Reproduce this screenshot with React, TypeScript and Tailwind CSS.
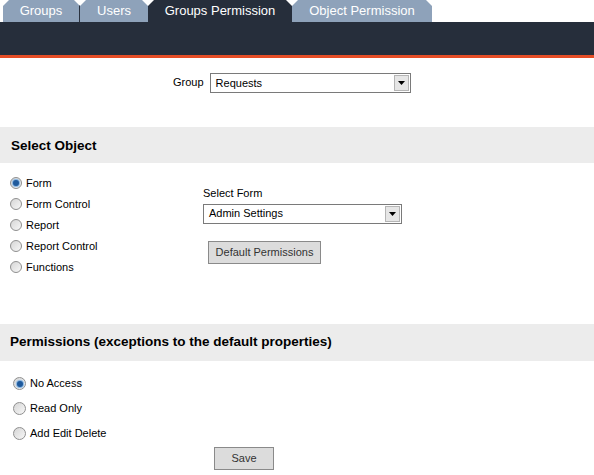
import React from "react"

const tabs = [
  { label: "Groups", w: "w-[77px]", active: false },
  { label: "Users", w: "w-[68px]", active: false },
  { label: "Groups Permission", w: "w-[144px]", active: true },
  { label: "Object Permission", w: "w-[140px]", active: false },
]

function Radio({ checked, big }: { checked?: boolean; big?: boolean }) {
  return (
    <span
      className={`flex items-center justify-center rounded-full border border-[#8f8f8f] bg-gradient-to-br from-[#d6d6d6] to-[#f7f7f7] ${big ? "h-[13px] w-[13px]" : "h-[12px] w-[12px]"}`}
    >
      {checked && <span className="h-[6px] w-[6px] rounded-full bg-[#1f5a9c] shadow-[0_0_1px_1px_#7fb0e0]" />}
    </span>
  )
}

function Select({ value, width }: { value: string; width: string }) {
  return (
    <div className={`flex h-[20px] items-center border border-[#7a7a7a] bg-white ${width}`}>
      <span className="flex-1 pl-[5px] text-[11px] text-black">{value}</span>
      <span className="mr-[1px] flex h-[16px] w-[15px] items-center justify-center border border-[#b5b5b5] bg-[#e6e6e6]">
        <svg width="7" height="4" viewBox="0 0 7 4">
          <path d="M0 0h7L3.5 4z" fill="#000" />
        </svg>
      </span>
    </div>
  )
}

export default function App() {
  return (
    <div className="h-[475px] w-[594px] bg-white font-['Liberation_Sans',Arial,sans-serif]">
      {/* tabs */}
      <div className="flex h-[22px] pl-[3px]">
        {tabs.map((t, i) => (
          <div
            key={t.label}
            className={`flex items-center justify-center text-[13px] text-white ${t.w} ${t.active ? "bg-[#262e3b]" : "bg-[#8ea2ba]"} ${i === 0 ? "border-r border-[#2b3340]" : ""} [clip-path:polygon(6px_0,calc(100%-6px)_0,100%_6px,100%_100%,0_100%,0_6px)]`}
          >
            {t.label}
          </div>
        ))}
      </div>
      <div className="h-[33px] bg-[#262e3b]" />
      <div className="h-[3px] bg-[#e54d26]" />

      {/* group */}
      <div className="flex items-start pl-[173px] pt-[15px]">
        <span className="pt-[1px] text-[11px] text-black">Group</span>
        <div className="ml-[6px]">
          <Select value="Requests" width="w-[201px]" />
        </div>
      </div>

      {/* select object */}
      <div className="mt-[34px] flex h-[36px] items-center bg-[#ececec] pl-[11px]">
        <span className="pt-[2px] text-[13.5px] font-bold text-black">Select Object</span>
      </div>
      <div className="flex pt-[14px]">
        <div className="flex w-[203px] flex-col gap-[9px] pl-[10px]">
          {["Form", "Form Control", "Report", "Report Control", "Functions"].map((l, i) => (
            <div key={l} className="flex h-[12px] items-center gap-[4px]">
              <Radio checked={i === 0} />
              <span className="text-[11px] text-black">{l}</span>
            </div>
          ))}
        </div>
        <div className="flex flex-col pt-[8px]">
          <span className="text-[11px] text-black">Select Form</span>
          <div className="mt-[2px]">
            <Select value="Admin Settings" width="w-[199px]" />
          </div>
          <button className="ml-[5px] mt-[17px] h-[23px] w-[113px] border border-[#8a8a8a] bg-[#dcdcdc] text-[11px] text-[#333]">
            Default Permissions
          </button>
        </div>
      </div>

      {/* permissions */}
      <div className="mt-[51px] flex h-[37px] items-center bg-[#ececec] pl-[10px]">
        <span className="text-[13.5px] font-bold text-black">Permissions (exceptions to the default properties)</span>
      </div>
      <div className="flex flex-col gap-[12px] pl-[13px] pt-[16px]">
        {["No Access", "Read Only", "Add Edit Delete"].map((l, i) => (
          <div key={l} className="flex h-[13px] items-center gap-[4px]">
            <Radio big checked={i === 0} />
            <span className="text-[11px] text-black">{l}</span>
          </div>
        ))}
      </div>
      <div className="pl-[214px] pt-[5px]">
        <button className="h-[23px] w-[60px] border border-[#8a8a8a] bg-[#dcdcdc] text-[11px] text-[#333]">Save</button>
      </div>
    </div>
  )
}
